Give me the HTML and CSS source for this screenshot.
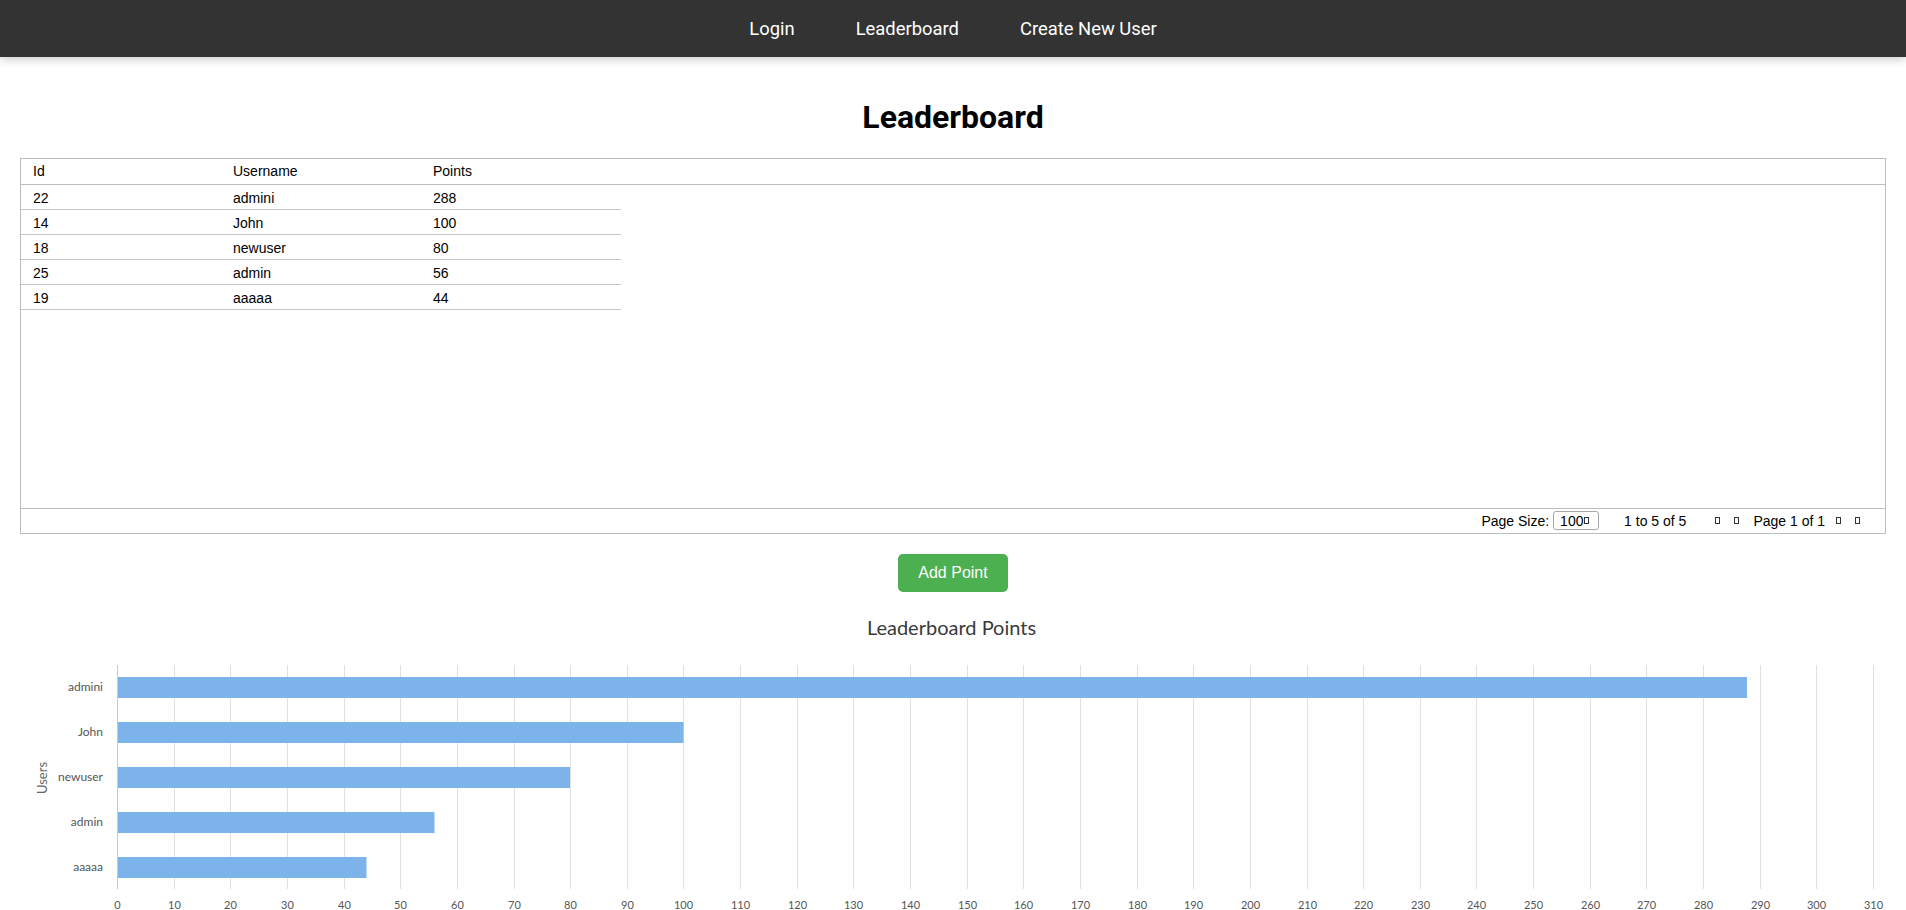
FILE: index.html
```html
<!DOCTYPE html>
<html lang="en">
<head>
<meta charset="utf-8">
<title>Leaderboard</title>
<link rel="stylesheet" href="styles.css">
</head>
<body>
<nav class="navbar">
  <a class="nav-link" href="#">Login</a>
  <a class="nav-link" href="#">Leaderboard</a>
  <a class="nav-link" href="#">Create New User</a>
</nav>
<main class="main">
  <h1 class="page-title">Leaderboard</h1>
  <div class="grid">
    <div class="grid-header">
      <div class="cell">Id</div>
      <div class="cell">Username</div>
      <div class="cell">Points</div>
    </div>
    <div class="grid-body">
      <div class="grid-row"><div class="cell">22</div><div class="cell">admini</div><div class="cell">288</div></div>
      <div class="grid-row"><div class="cell">14</div><div class="cell">John</div><div class="cell">100</div></div>
      <div class="grid-row"><div class="cell">18</div><div class="cell">newuser</div><div class="cell">80</div></div>
      <div class="grid-row"><div class="cell">25</div><div class="cell">admin</div><div class="cell">56</div></div>
      <div class="grid-row"><div class="cell">19</div><div class="cell">aaaaa</div><div class="cell">44</div></div>
    </div>
    <div class="grid-footer">
      <span>Page Size:</span>
      <div class="page-size">100<span class="tofu tofu-select"></span></div>
      <span class="row-summary">1 to 5 of 5</span>
      <span class="tofu pager-first"></span>
      <span class="tofu pager-prev"></span>
      <span class="page-desc">Page 1 of 1</span>
      <span class="tofu pager-next"></span>
      <span class="tofu pager-last"></span>
    </div>
  </div>
  <div class="actions">
    <button class="add-btn" type="button">Add Point</button>
  </div>
  <svg class="chart" width="1863" height="420" viewBox="0 0 1863 420">
    <text class="chart-title" x="931.5" y="23" text-anchor="middle">Leaderboard Points</text>
    <g class="grid-lines">
      <line x1="154.5" y1="53" x2="154.5" y2="277"/>
      <line x1="210.5" y1="53" x2="210.5" y2="277"/>
      <line x1="267.5" y1="53" x2="267.5" y2="277"/>
      <line x1="324.5" y1="53" x2="324.5" y2="277"/>
      <line x1="380.5" y1="53" x2="380.5" y2="277"/>
      <line x1="437.5" y1="53" x2="437.5" y2="277"/>
      <line x1="494.5" y1="53" x2="494.5" y2="277"/>
      <line x1="550.5" y1="53" x2="550.5" y2="277"/>
      <line x1="607.5" y1="53" x2="607.5" y2="277"/>
      <line x1="663.5" y1="53" x2="663.5" y2="277"/>
      <line x1="720.5" y1="53" x2="720.5" y2="277"/>
      <line x1="777.5" y1="53" x2="777.5" y2="277"/>
      <line x1="833.5" y1="53" x2="833.5" y2="277"/>
      <line x1="890.5" y1="53" x2="890.5" y2="277"/>
      <line x1="947.5" y1="53" x2="947.5" y2="277"/>
      <line x1="1003.5" y1="53" x2="1003.5" y2="277"/>
      <line x1="1060.5" y1="53" x2="1060.5" y2="277"/>
      <line x1="1117.5" y1="53" x2="1117.5" y2="277"/>
      <line x1="1173.5" y1="53" x2="1173.5" y2="277"/>
      <line x1="1230.5" y1="53" x2="1230.5" y2="277"/>
      <line x1="1287.5" y1="53" x2="1287.5" y2="277"/>
      <line x1="1343.5" y1="53" x2="1343.5" y2="277"/>
      <line x1="1400.5" y1="53" x2="1400.5" y2="277"/>
      <line x1="1456.5" y1="53" x2="1456.5" y2="277"/>
      <line x1="1513.5" y1="53" x2="1513.5" y2="277"/>
      <line x1="1570.5" y1="53" x2="1570.5" y2="277"/>
      <line x1="1626.5" y1="53" x2="1626.5" y2="277"/>
      <line x1="1683.5" y1="53" x2="1683.5" y2="277"/>
      <line x1="1740.5" y1="53" x2="1740.5" y2="277"/>
      <line x1="1796.5" y1="53" x2="1796.5" y2="277"/>
      <line x1="1853.5" y1="53" x2="1853.5" y2="277"/>
    </g>
    <line class="axis-line" x1="97.5" y1="53" x2="97.5" y2="277"/>
    <g class="bars">
      <rect x="98" y="65" width="1629" height="21"/>
      <rect x="98" y="110" width="565.5" height="21"/>
      <rect x="98" y="155" width="452" height="21"/>
      <rect x="98" y="200" width="316.5" height="21"/>
      <rect x="98" y="245" width="248.5" height="21"/>
    </g>
    <g class="axis-labels" text-anchor="end">
      <text x="83" y="79">admini</text>
      <text x="83" y="124">John</text>
      <text x="83" y="169">newuser</text>
      <text x="83" y="214">admin</text>
      <text x="83" y="259">aaaaa</text>
    </g>
    <text class="axis-title" transform="translate(27 166) rotate(-90)" text-anchor="middle">Users</text>
    <g class="tick-labels" text-anchor="middle">
      <text x="97.5" y="297">0</text>
      <text x="154.5" y="297">10</text>
      <text x="210.5" y="297">20</text>
      <text x="267.5" y="297">30</text>
      <text x="324.5" y="297">40</text>
      <text x="380.5" y="297">50</text>
      <text x="437.5" y="297">60</text>
      <text x="494.5" y="297">70</text>
      <text x="550.5" y="297">80</text>
      <text x="607.5" y="297">90</text>
      <text x="663.5" y="297">100</text>
      <text x="720.5" y="297">110</text>
      <text x="777.5" y="297">120</text>
      <text x="833.5" y="297">130</text>
      <text x="890.5" y="297">140</text>
      <text x="947.5" y="297">150</text>
      <text x="1003.5" y="297">160</text>
      <text x="1060.5" y="297">170</text>
      <text x="1117.5" y="297">180</text>
      <text x="1173.5" y="297">190</text>
      <text x="1230.5" y="297">200</text>
      <text x="1287.5" y="297">210</text>
      <text x="1343.5" y="297">220</text>
      <text x="1400.5" y="297">230</text>
      <text x="1456.5" y="297">240</text>
      <text x="1513.5" y="297">250</text>
      <text x="1570.5" y="297">260</text>
      <text x="1626.5" y="297">270</text>
      <text x="1683.5" y="297">280</text>
      <text x="1740.5" y="297">290</text>
      <text x="1796.5" y="297">300</text>
      <text x="1853.5" y="297">310</text>
    </g>
  </svg>
</main>
</body>
</html>
```
FILE: styles.css
```css
html, body {
  margin: 0;
  padding: 0;
}

body {
  font-family: "Liberation Sans", Arial, sans-serif;
  color: #000;
  background: #fff;
}

::-webkit-scrollbar {
  width: 3px;
}
::-webkit-scrollbar-track {
  background: #f1f1f1;
}
::-webkit-scrollbar-thumb {
  background: #a9a9a9;
}

.navbar {
  height: 57px;
  background: #333333;
  display: flex;
  justify-content: center;
  align-items: center;
  gap: 61px;
  box-shadow: 0 2px 9px rgba(0, 0, 0, 0.22);
  position: relative;
  z-index: 1;
}

.nav-link {
  font-family: Roboto, sans-serif;
  font-size: 18.4px;
  color: #fff;
  text-decoration: none;
}

.main {
  padding: 20px;
}

.page-title {
  font-family: Roboto, sans-serif;
  font-weight: 700;
  font-size: 32px;
  text-align: center;
  margin: 21.44px 0;
}

.grid {
  height: 376px;
  box-sizing: border-box;
  border: 1px solid #bdbdbd;
  display: flex;
  flex-direction: column;
  font-size: 14px;
}

.grid-header {
  height: 26px;
  box-sizing: border-box;
  border-bottom: 1px solid #bdbdbd;
  display: flex;
  align-items: center;
}

.grid-body {
  flex: 1;
}

.grid-row {
  width: 600px;
  height: 25px;
  box-sizing: border-box;
  border-bottom: 1px solid #c6c6c6;
  padding-top: 2px;
  display: flex;
  align-items: center;
}

.cell {
  width: 200px;
  padding-left: 12px;
  box-sizing: border-box;
}

.grid-footer {
  height: 25px;
  box-sizing: border-box;
  border-top: 1px solid #bdbdbd;
  display: flex;
  justify-content: flex-end;
  align-items: center;
  padding-right: 25px;
}

.page-size {
  margin-left: 4px;
  width: 46px;
  height: 19px;
  box-sizing: border-box;
  border: 1px solid #a6a6a6;
  border-radius: 3px;
  padding-left: 6px;
  display: flex;
  align-items: center;
}

.tofu {
  display: inline-block;
  width: 5px;
  height: 7px;
  box-sizing: border-box;
  border: 1px solid #333;
}

.tofu-select {
  margin-left: 1px;
}

.row-summary {
  margin-left: 25px;
}

.pager-first {
  margin-left: 29px;
}

.pager-prev {
  margin-left: 14px;
}

.page-desc {
  margin-left: 14px;
}

.pager-next {
  margin-left: 11px;
}

.pager-last {
  margin-left: 14px;
}

.actions {
  display: flex;
  justify-content: center;
  margin-top: 20px;
}

.add-btn {
  background: #4caf50;
  color: #fff;
  border: none;
  border-radius: 5px;
  font-family: "Liberation Sans", Arial, sans-serif;
  font-size: 16px;
  line-height: 18px;
  padding: 10px 20px;
  cursor: pointer;
}

.chart {
  display: block;
  margin-top: 20px;
}

.chart-title {
  font-family: Lato, sans-serif;
  font-size: 20px;
  fill: #3a3a3a;
}

.grid-lines line {
  stroke: #e0e0e0;
  stroke-width: 1;
}

.axis-line {
  stroke: #c3cad6;
  stroke-width: 1;
}

.bars rect {
  fill: #7cb3ea;
}

.axis-labels text {
  font-family: Lato, sans-serif;
  font-size: 12px;
  fill: #555;
}

.axis-title {
  font-family: Lato, sans-serif;
  font-size: 13px;
  fill: #666;
}

.tick-labels text {
  font-family: Lato, sans-serif;
  font-size: 11px;
  fill: #555;
}
```
